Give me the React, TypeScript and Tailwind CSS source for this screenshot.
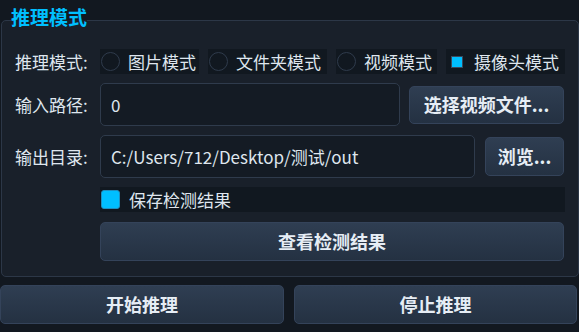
import React from 'react'

const modes = [
  { label: '图片模式', width: 'w-[99px]', checked: false },
  { label: '文件夹模式', width: 'w-[119px]', checked: false },
  { label: '视频模式', width: 'w-[101px]', checked: false },
  { label: '摄像头模式', width: 'w-[119px]', checked: true },
]

const btn =
  'flex items-center justify-center rounded-[5px] border border-[#34435a] bg-gradient-to-b from-[#2f3e52] to-[#243142] text-[18px] font-bold text-[#e6edf5]'

const App = () => {
  return (
    <div
      className="h-[332px] w-[579px] overflow-hidden bg-[#121820] pt-[5px] text-[17px] text-[#dfe6ee]"
      style={{ fontFamily: '"Noto Sans CJK SC", "Noto Sans", sans-serif' }}
    >
      <fieldset className="mx-px h-[272px] w-[577px] rounded-[5px] border border-[#2c3747] bg-[#19202a] px-[13px] pb-[14px] pt-[14px]">
        <legend className="-ml-[4px] px-0 pb-[6px] text-[19px] font-bold leading-[24px] text-[#00bfff]">推理模式</legend>

        <div className="flex flex-col gap-[9px]">
          <div className="flex h-[25px] items-center">
            <span className="w-[85px] leading-none">推理模式:</span>
            <div className="flex gap-[9px]">
              {modes.map((m) => (
                <div key={m.label} className={`flex h-[25px] items-center bg-[#111820] pl-px ${m.width}`}>
                  <span className="flex h-[19px] w-[19px] items-center justify-center">
                    {m.checked ? (
                      <span className="h-[12px] w-[12px] border border-[#3a4a5e] bg-[#00bfff]" />
                    ) : (
                      <span className="h-[19px] w-[19px] rounded-full border border-[#2f3b4c]" />
                    )}
                  </span>
                  <span className="ml-[8px] leading-none">{m.label}</span>
                </div>
              ))}
            </div>
          </div>

          <div className="flex h-[43px] items-center">
            <span className="w-[85px] leading-none">输入路径:</span>
            <div className="flex h-[43px] w-[300px] items-center rounded-[5px] border border-[#2f3b4c] bg-[#141b24] px-[10px] leading-none">
              0
            </div>
            <button className={`${btn} ml-[9px] h-[38px] w-[155px]`}>选择视频文件...</button>
          </div>

          <div className="flex h-[43px] items-center">
            <span className="w-[85px] leading-none">输出目录:</span>
            <div className="flex h-[43px] w-[375px] items-center rounded-[5px] border border-[#2f3b4c] bg-[#141b24] px-[10px] leading-none">
              C:/Users/712/Desktop/测试/out
            </div>
            <button className={`${btn} ml-[10px] h-[39px] w-[79px]`}>浏览...</button>
          </div>

          <div className="ml-[85px] flex h-[25px] items-center bg-[#111820] pl-px">
            <span className="h-[19px] w-[19px] rounded-[3px] border border-[#1e8fc0] bg-[#00bfff]" />
            <span className="ml-[9px] leading-none">保存检测结果</span>
          </div>

          <button className={`${btn} ml-[85px] mt-px h-[39px] w-[464px]`}>查看检测结果</button>
        </div>
      </fieldset>

      <div className="mt-[8px] flex gap-[10px] pr-[2px]">
        <button className={`${btn} h-[39px] w-[284px]`}>开始推理</button>
        <button className={`${btn} h-[39px] w-[283px]`}>停止推理</button>
      </div>
    </div>
  )
}

export default App
